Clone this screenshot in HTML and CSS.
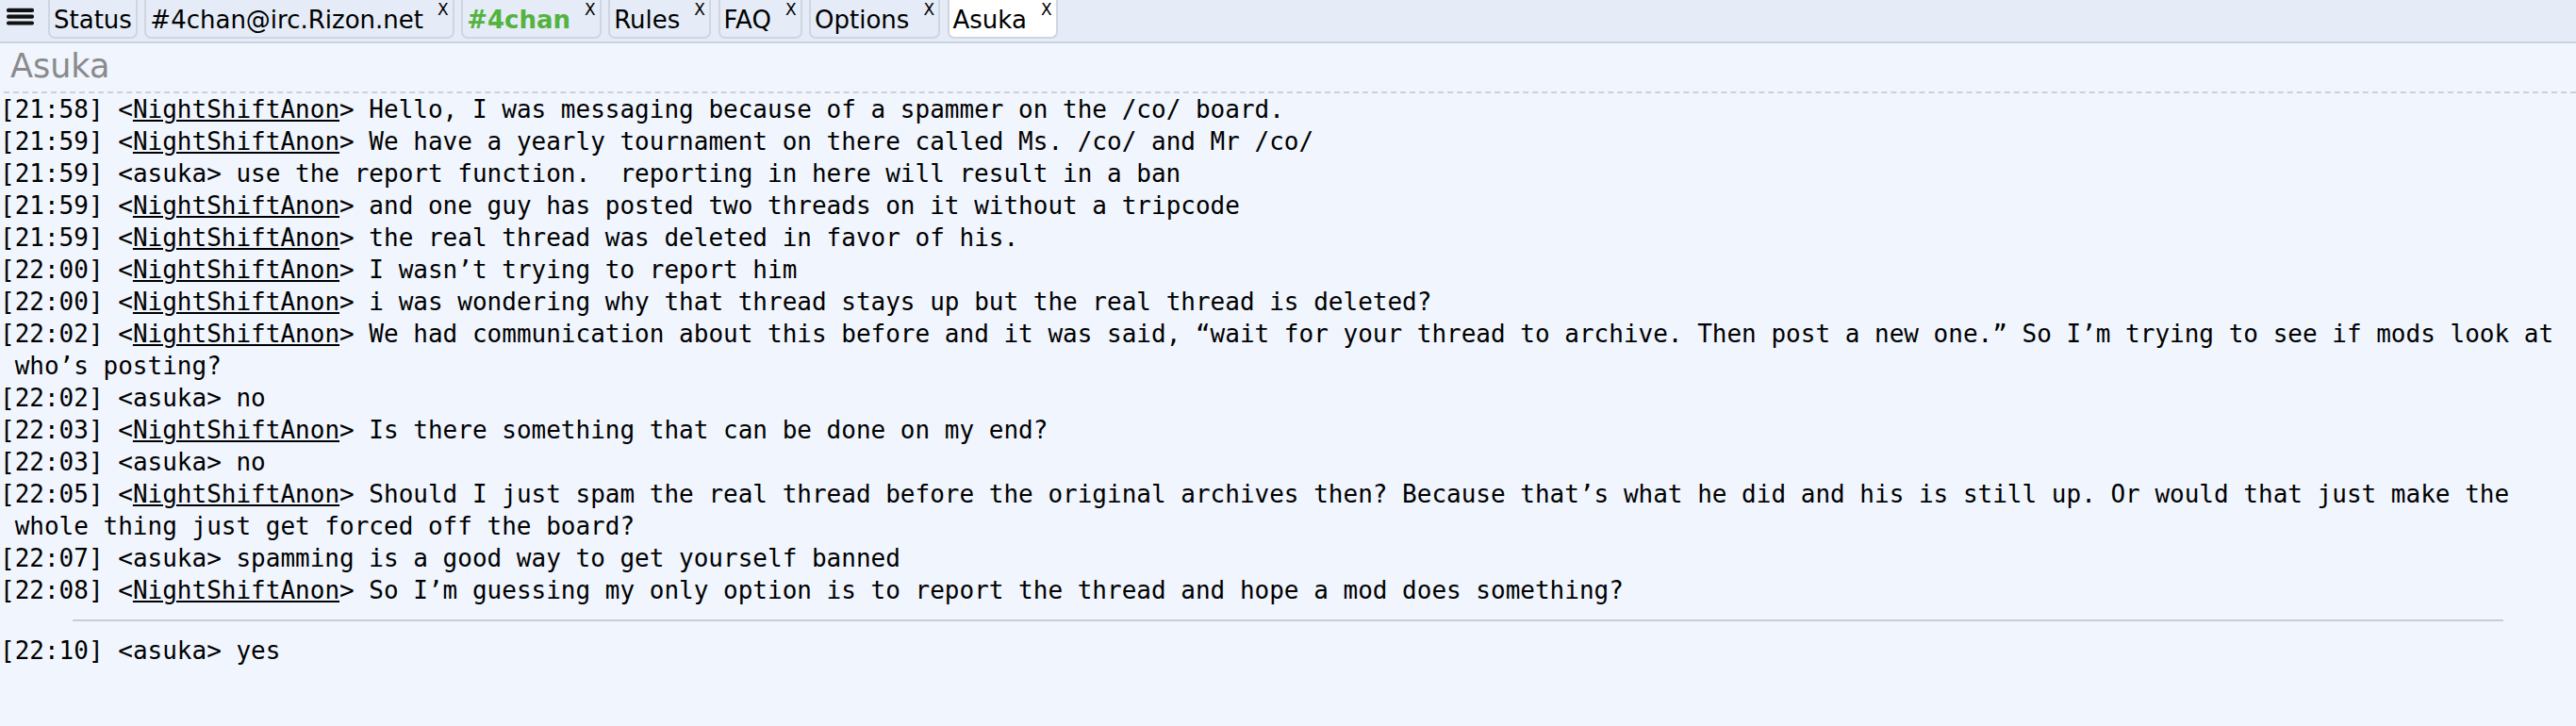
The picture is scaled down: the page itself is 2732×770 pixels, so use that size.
FILE: index.html
```html
<!DOCTYPE html>
<html lang="en">
<head>
<meta charset="utf-8">
<title>Asuka</title>
<link rel="stylesheet" href="styles.css">
</head>
<body>
<div class="tabbar">
  <div class="menu">
    <svg width="29" height="30" viewBox="0 0 29 30"><rect x="0" y="8.8" width="29" height="4.2" rx="1.8" fill="#111"/><rect x="0" y="15.6" width="29" height="4.2" rx="1.8" fill="#111"/><rect x="0" y="22.4" width="29" height="4.2" rx="1.8" fill="#111"/></svg>
  </div>
  <div class="tab"><span class="label">Status</span></div>
  <div class="tab"><span class="label">#4chan@irc.Rizon.net</span><span class="close">X</span></div>
  <div class="tab"><span class="label green">#4chan</span><span class="close">X</span></div>
  <div class="tab"><span class="label">Rules</span><span class="close">X</span></div>
  <div class="tab"><span class="label">FAQ</span><span class="close">X</span></div>
  <div class="tab"><span class="label">Options</span><span class="close">X</span></div>
  <div class="tab active"><span class="label">Asuka</span><span class="close">X</span></div>
</div>
<div class="header">Asuka</div>
<div class="chat">
<div class="line">[21:58] &lt;<span class="nick">NightShiftAnon</span>&gt; Hello, I was messaging because of a spammer on the /co/ board.</div>
<div class="line">[21:59] &lt;<span class="nick">NightShiftAnon</span>&gt; We have a yearly tournament on there called Ms. /co/ and Mr /co/</div>
<div class="line">[21:59] &lt;asuka&gt; use the report function.  reporting in here will result in a ban</div>
<div class="line">[21:59] &lt;<span class="nick">NightShiftAnon</span>&gt; and one guy has posted two threads on it without a tripcode</div>
<div class="line">[21:59] &lt;<span class="nick">NightShiftAnon</span>&gt; the real thread was deleted in favor of his.</div>
<div class="line">[22:00] &lt;<span class="nick">NightShiftAnon</span>&gt; I wasn’t trying to report him</div>
<div class="line">[22:00] &lt;<span class="nick">NightShiftAnon</span>&gt; i was wondering why that thread stays up but the real thread is deleted?</div>
<div class="line">[22:02] &lt;<span class="nick">NightShiftAnon</span>&gt; We had communication about this before and it was said, “wait for your thread to archive. Then post a new one.” So I’m trying to see if mods look at who’s posting?</div>
<div class="line">[22:02] &lt;asuka&gt; no</div>
<div class="line">[22:03] &lt;<span class="nick">NightShiftAnon</span>&gt; Is there something that can be done on my end?</div>
<div class="line">[22:03] &lt;asuka&gt; no</div>
<div class="line">[22:05] &lt;<span class="nick">NightShiftAnon</span>&gt; Should I just spam the real thread before the original archives then? Because that’s what he did and his is still up. Or would that just make the whole thing just get forced off the board?</div>
<div class="line">[22:07] &lt;asuka&gt; spamming is a good way to get yourself banned</div>
<div class="line">[22:08] &lt;<span class="nick">NightShiftAnon</span>&gt; So I’m guessing my only option is to report the thread and hope a mod does something?</div>
<hr class="sep">
<div class="line">[22:10] &lt;asuka&gt; yes</div>
</div>
</body>
</html>
```
FILE: styles.css
```css
html, body {
  margin: 0;
  padding: 0;
  background: #f0f5fe;
}
body {
  font-family: "DejaVu Sans", sans-serif;
  color: #000;
}
.tabbar {
  display: flex;
  align-items: flex-start;
  gap: 7.5px;
  height: 44px;
  padding-left: 7px;
  background: #e5ecf7;
  border-bottom: 2px solid #c8d2df;
}
.menu {
  width: 29px;
  height: 41px;
  margin-right: 7.5px;
}
.menu svg {
  display: block;
}
.tab {
  display: flex;
  align-items: flex-start;
  padding: 6px 4px 3px;
  border: 2px solid #cfd6e2;
  border-top: 0;
  border-radius: 0 0 7px 7px;
  background: #e5ecf7;
  font-size: 26px;
  line-height: 30px;
}
.tab.active {
  background: #ffffff;
}
.label {
  white-space: nowrap;
}
.green {
  color: #52b33f;
  font-weight: bold;
}
.close {
  font-size: 17px;
  line-height: 17px;
  margin-left: 15px;
  margin-top: -4px;
}
.header {
  margin-left: 4px;
  padding: 4px 0 6px 7px;
  font-size: 35px;
  line-height: 41px;
  color: #8a8a8a;
  border-bottom: 2px dashed #cdd0da;
}
.chat {
  font-family: "DejaVu Sans Mono", monospace;
  font-size: 26px;
  line-height: 34px;
}
.line {
  white-space: pre-wrap;
  padding-left: 1ch;
  text-indent: -1ch;
}
.nick {
  text-decoration: underline;
}
.sep {
  height: 2px;
  border: 0;
  margin: 14px 77px;
  background: #c8ccd8;
}
```
